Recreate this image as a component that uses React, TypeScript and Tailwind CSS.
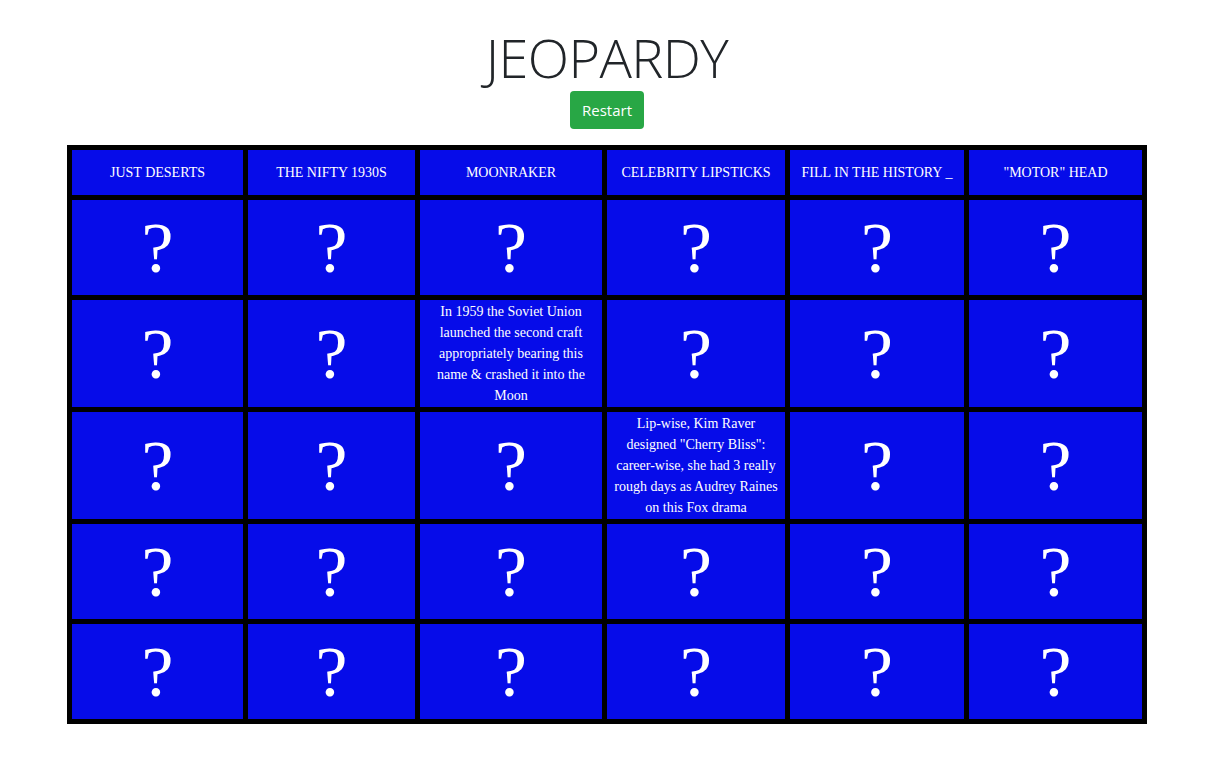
import React from "react";

const categories = [
  "JUST DESERTS",
  "THE NIFTY 1930S",
  "MOONRAKER",
  "CELEBRITY LIPSTICKS",
  "FILL IN THE HISTORY _",
  '"MOTOR" HEAD',
];

const rowHeights = ["h-[95px]", "h-[107px]", "h-[107px]", "h-[95px]", "h-[95px]"];

const clues: Record<string, string> = {
  "1-2": "In 1959 the Soviet Union launched the second craft appropriately bearing this name & crashed it into the Moon",
  "2-3": 'Lip-wise, Kim Raver designed "Cherry Bliss": career-wise, she had 3 really rough days as Audrey Raines on this Fox drama',
};

export default function App() {
  return (
    <div className="w-[1214px] bg-white flex flex-col items-center pt-[26px] font-['Open_Sans',sans-serif]">
      <h1 className="text-[54px] font-light leading-[62px] text-[#212529] tracking-[-0.6px]">JEOPARDY</h1>
      <button className="mt-[3px] h-[38px] w-[74px] rounded-[4px] bg-[#28a745] text-white text-[15px] leading-[24px]">
        Restart
      </button>
      <div className="mt-[16px] w-[1080px] bg-black p-[5px] grid grid-cols-[171px_167px_182px_178px_174px_173px] gap-[5px] font-['Liberation_Serif',serif] text-white">
        {categories.map((c) => (
          <div key={c} className="h-[45px] bg-[#060ce9] flex items-center justify-center text-center text-[14px] leading-[21px] px-[1px]">
            {c}
          </div>
        ))}
        {rowHeights.map((h, r) =>
          categories.map((_, c) => {
            const clue = clues[`${r}-${c}`];
            return (
              <div key={`${r}-${c}`} className={`${h} bg-[#060ce9] flex items-center justify-center text-center px-[6px]`}>
                {clue ? (
                  <span className="text-[14px] leading-[21px]">{clue}</span>
                ) : (
                  <span className="text-[72px] leading-[72px]">?</span>
                )}
              </div>
            );
          })
        )}
      </div>
    </div>
  );
}
